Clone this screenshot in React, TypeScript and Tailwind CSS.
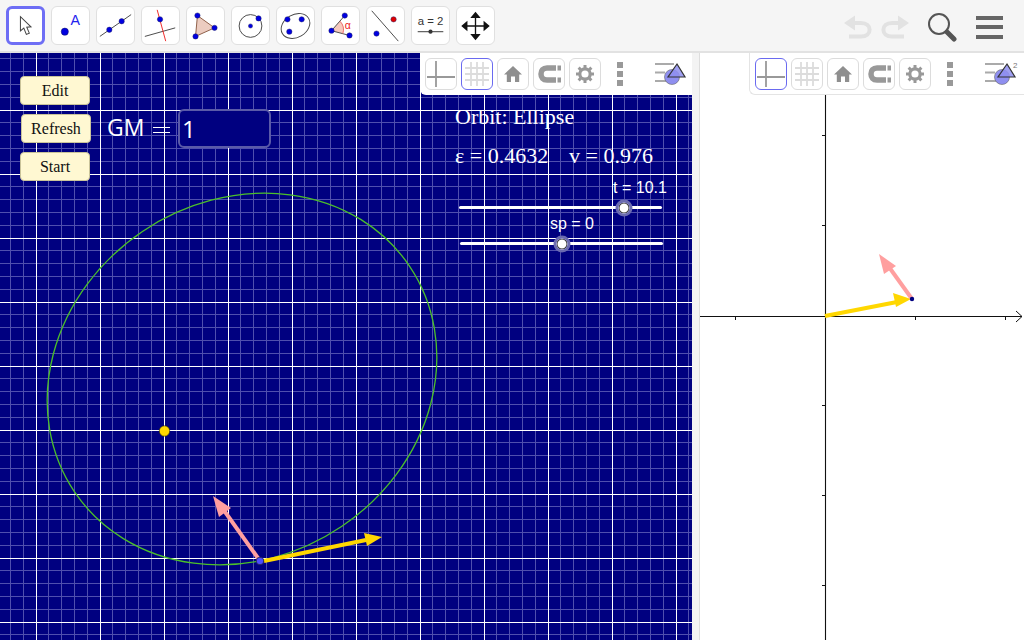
const toolBtn = "w-[39px] h-[39px] rounded-[6px] bg-white flex items-center justify-center shrink-0";
const styleBtn = "w-[32px] h-[32px] rounded-[6px] bg-white flex items-center justify-center shrink-0";

const Dot = ({ x, y, r = 2.8, c = "#0000e0" }: { x: number; y: number; r?: number; c?: string }) => (
  <circle cx={x} cy={y} r={r} fill={c} stroke="#222266" strokeWidth="0.5" />
);

const tools = [
  <svg width="39" height="39" viewBox="0 0 39 39" key="move">
    <path d="M13.5 9 L13.5 26 L17.5 22.5 L20.5 30 L24 28.5 L21 21.5 L26 21 Z" fill="#fff" stroke="#444" strokeWidth="1.2" />
  </svg>,
  <svg width="39" height="39" viewBox="0 0 39 39" key="point">
    <circle cx="13.5" cy="26" r="3.8" fill="#0000e0" stroke="#111155" strokeWidth="0.5" />
    <text x="19.5" y="19" fontSize="15" fill="#2222ee" fontFamily="'Liberation Sans', sans-serif">A</text>
  </svg>,
  <svg width="39" height="39" viewBox="0 0 39 39" key="line">
    <line x1="3" y1="31" x2="36" y2="8" stroke="#444" strokeWidth="1" />
    <Dot x={13} y={24} />
    <Dot x={26} y={15} />
  </svg>,
  <svg width="39" height="39" viewBox="0 0 39 39" key="perp">
    <line x1="3" y1="31" x2="35" y2="22" stroke="#444" strokeWidth="1" />
    <line x1="16" y1="3" x2="25" y2="36" stroke="#ee2222" strokeWidth="1" />
    <Dot x={19} y={13} />
  </svg>,
  <svg width="39" height="39" viewBox="0 0 39 39" key="poly">
    <path d="M11 9 L29 22 L9 31 Z" fill="#ecccc0" stroke="#8a5a44" strokeWidth="1" />
    <Dot x={11} y={9} />
    <Dot x={29} y={22} />
    <Dot x={9} y={31} />
  </svg>,
  <svg width="39" height="39" viewBox="0 0 39 39" key="circle">
    <circle cx="19.5" cy="20" r="12" fill="none" stroke="#444" strokeWidth="1" />
    <Dot x={19.5} y={20} r={2.2} />
    <Dot x={28} y={12} />
  </svg>,
  <svg width="39" height="39" viewBox="0 0 39 39" key="ellipse">
    <ellipse cx="19.5" cy="20" rx="16" ry="12" transform="rotate(-30 19.5 20)" fill="none" stroke="#444" strokeWidth="1" />
    <Dot x={11} y={13} />
    <Dot x={26} y={13} />
    <Dot x={13} y={26} />
  </svg>,
  <svg width="39" height="39" viewBox="0 0 39 39" key="angle">
    <path d="M10 25 L19 15 A13 13 0 0 1 22 28 Z" fill="#f6c9bd" />
    <path d="M24 9 L10 25 L29 30" fill="none" stroke="#444" strokeWidth="1" />
    <path d="M19 15 A13 13 0 0 1 22 28" fill="none" stroke="#e66" strokeWidth="1" />
    <text x="24" y="23" fontSize="11" fill="#ee2222" fontFamily="'Liberation Sans', sans-serif">α</text>
    <Dot x={24} y={9} />
    <Dot x={10} y={25} />
    <Dot x={29} y={30} />
  </svg>,
  <svg width="39" height="39" viewBox="0 0 39 39" key="reflect">
    <line x1="5" y1="4" x2="33" y2="36" stroke="#444" strokeWidth="1" />
    <Dot x={28} y={13} c="#e00000" />
    <Dot x={10} y={28} />
  </svg>,
  <svg width="39" height="39" viewBox="0 0 39 39" key="slider">
    <text x="19.5" y="19" textAnchor="middle" fontSize="12" fill="#333" fontFamily="'Liberation Sans', sans-serif">a = 2</text>
    <line x1="6" y1="26" x2="33" y2="26" stroke="#555" strokeWidth="1.2" />
    <circle cx="19.5" cy="26" r="2.2" fill="#333" />
  </svg>,
  <svg width="39" height="39" viewBox="0 0 39 39" key="pan">
    <path d="M19.5 10 V30 M9.5 20 H29.5" stroke="#111" strokeWidth="1.4" />
    <path d="M19.5 5 L25 11.5 H14 Z M19.5 35 L25 28.5 H14 Z M4.5 20 L11 14.5 V25.5 Z M34.5 20 L28 14.5 V25.5 Z" fill="#111" />
  </svg>,
];

// style bar icons, same drawings in both views
const AxesIcon = () => (
  <svg width="30" height="30" viewBox="0 0 30 30">
    <path d="M10 2 V28 M1 18 H29" stroke="#999" strokeWidth="1.8" fill="none" />
  </svg>
);
const GridIcon = () => (
  <svg width="30" height="30" viewBox="0 0 30 30">
    <path d="M9 3 V27 M15 3 V27 M21 3 V27 M3 9 H27 M3 15 H27 M3 21 H27" stroke="#dcdcdc" strokeWidth="1.8" fill="none" />
  </svg>
);
const HomeIcon = () => (
  <svg width="20" height="18" viewBox="0 0 20 18">
    <path d="M10 1 L19 9.5 H16.2 V17 H12 V11.5 H8 V17 H3.8 V9.5 H1 Z" fill="#8f8f8f" />
  </svg>
);
const MagnetIcon = () => (
  <svg width="26" height="20" viewBox="0 0 26 20">
    <path d="M20 4 H11 C7 4 5 6.5 5 10 C5 13.5 7 16 11 16 H20" fill="none" stroke="#999" strokeWidth="5.5" />
    <path d="M21.5 1.5 H25 V6.5 H21.5 Z M21.5 13.5 H25 V18.5 H21.5 Z" fill="#999" />
  </svg>
);
const GearIcon = () => (
  <svg width="20" height="20" viewBox="0 0 20 20">
    <circle cx="10" cy="10" r="5.2" fill="none" stroke="#999" strokeWidth="3.2" />
    <path d="M10 1 V4 M10 16 V19 M1 10 H4 M16 10 H19 M3.6 3.6 L5.8 5.8 M14.2 14.2 L16.4 16.4 M3.6 16.4 L5.8 14.2 M14.2 5.8 L16.4 3.6" stroke="#999" strokeWidth="3" />
  </svg>
);
const DotsIcon = () => (
  <div className="w-[30px] flex flex-col items-center gap-[3px]">
    <div className="w-[6px] h-[6px] bg-[#999]" />
    <div className="w-[6px] h-[6px] bg-[#999]" />
    <div className="w-[6px] h-[6px] bg-[#999]" />
  </div>
);
const ViewIcon = ({ two }: { two?: boolean }) => (
  <svg width="34" height="26" viewBox="0 0 34 26">
    <path d="M1 3 H20 M1 11.5 H11 M1 20 H13" stroke="#aaa" strokeWidth="2" />
    <circle cx="18" cy="16" r="7.5" fill="#8f8ff0" stroke="#666" strokeWidth="0.6" />
    <path d="M23 3 L31 16 H14 Z" fill="#8f8ff0" fillOpacity="0.85" stroke="#333" strokeWidth="1.2" />
    {two && <text x="29" y="7" fontSize="8" fill="#777" fontFamily="'Liberation Sans', sans-serif">2</text>}
  </svg>
);

const StyleBar = ({ active, two }: { active: "axes" | "grid"; two?: boolean }) => (
  <>
    <div className={`${styleBtn} border ${active === "axes" ? "border-[#6a6af0]" : "border-[#dcdcdc]"}`}><AxesIcon /></div>
    <div className={`${styleBtn} border ${active === "grid" ? "border-[#6a6af0]" : "border-[#dcdcdc]"}`}><GridIcon /></div>
    <div className={`${styleBtn} border border-[#dcdcdc]`}><HomeIcon /></div>
    <div className={`${styleBtn} border border-[#dcdcdc]`}><MagnetIcon /></div>
    <div className={`${styleBtn} border border-[#dcdcdc]`}><GearIcon /></div>
    <DotsIcon />
    <div className="ml-[15px]"><ViewIcon two={two} /></div>
  </>
);

// minor lines every 12.8px, snapped to whole pixels like the major ones
const minorX = Array.from({ length: 56 }, (_, i) => Math.floor(-2.4 + i * 12.8 + 0.001) + 0.5);
const minorY = Array.from({ length: 48 }, (_, i) => Math.floor(-7 + i * 12.8 + 0.001) + 0.5);
const majorX = [36.5, 100.5, 164.5, 228.5, 292.5, 356.5, 420.5, 484.5, 548.5, 612.5, 676.5];
const majorY = [57.5, 121.5, 185.5, 249.5, 313.5, 377.5, 441.5, 505.5, 569.5];

const GraphicsSvg = () => (
  <svg className="block" width="692" height="587" viewBox="0 0 692 587">
    {minorX.map((x) => <line key={x} x1={x} y1="0" x2={x} y2="587" stroke="#4f4fae" strokeWidth="1" shapeRendering="crispEdges" />)}
    {minorY.map((y) => <line key={y} x1="0" y1={y} x2="692" y2={y} stroke="#4f4fae" strokeWidth="1" shapeRendering="crispEdges" />)}
    {majorX.map((x) => <line key={x} x1={x} y1="0" x2={x} y2="587" stroke="#fff" strokeWidth="1" shapeRendering="crispEdges" />)}
    {majorY.map((y) => <line key={y} x1="0" y1={y} x2="692" y2={y} stroke="#fff" strokeWidth="1" shapeRendering="crispEdges" />)}
    <ellipse cx="242" cy="326" rx="202" ry="178" transform="rotate(-34 242 326)" fill="none" stroke="#4cc02a" strokeWidth="1.3" />
    <circle cx="164.5" cy="378" r="5.2" fill="#ffd700" stroke="#333300" strokeWidth="0.6" />
    <line x1="260" y1="508" x2="223" y2="456" stroke="#ff9f9f" strokeWidth="4" />
    <path d="M213 443 L231 455 L219 464 Z" fill="#ff9f9f" />
    <line x1="264" y1="508" x2="366" y2="487" stroke="#ffd700" strokeWidth="4" />
    <path d="M382 484 L364 480 L367 493 Z" fill="#ffd700" />
    <circle cx="260" cy="508" r="3.8" fill="#4d4dff" stroke="#222244" strokeWidth="0.8" />
  </svg>
);

const Slider = ({ label, pos, labelPos, w, cls }: { label: string; pos: number; labelPos: number; w: number; cls: string }) => (
  <div className={`absolute h-[3px] bg-white rounded-full ${cls}`} style={{ width: w }}>
    <span className="absolute bottom-[12px] -translate-x-1/2 text-[16px] leading-[18px] text-white whitespace-nowrap font-['Liberation_Sans',sans-serif]" style={{ left: labelPos }}>{label}</span>
    <span className="absolute top-1/2 -translate-x-1/2 -translate-y-1/2 w-[17px] h-[17px] rounded-full bg-white border-[3px] border-[#6b6bb0] shadow-[inset_0_0_0_1px_#333]" style={{ left: pos }} />
  </div>
);

const yellowBtn = "absolute h-[29px] w-[70px] rounded-[4px] bg-[#fff8d2] border border-[#c9c39a] text-[#111] text-[16px] flex items-center justify-center font-['Liberation_Serif',serif]";
const mathText = "absolute text-white text-[22px] leading-[26px] font-['Liberation_Serif',serif] whitespace-nowrap";

export default function App() {
  return (
    <div className="w-[1024px] h-[640px] bg-white overflow-hidden flex flex-col">
      {/* TOOLBAR */}
      <div className="h-[53px] shrink-0 bg-[#f5f5f5] border-b-2 border-[#e2e2e2] flex items-start pt-[6px] pl-[6px]">
        <div className="flex gap-[6px]">
          {tools.map((t, i) => (
            <div key={i} className={`${toolBtn} ${i === 0 ? "border-[3px] border-[#6e6ef5]" : "border border-[#e0e0e0]"}`}>{t}</div>
          ))}
        </div>
        <div className="ml-auto flex items-center h-[42px] pr-[21px]">
          <svg width="66" height="24" viewBox="0 0 66 24" className="mr-[17px]">
            <path d="M0 8 L11 0.5 V15.5 Z" fill="#e2e2e2" />
            <path d="M8 8 H17 C28.5 8 28.5 21.5 17 21.5 H5" fill="none" stroke="#e2e2e2" strokeWidth="4" />
            <path d="M65 8 L54 0.5 V15.5 Z" fill="#e2e2e2" />
            <path d="M57 8 H48 C36.5 8 36.5 21.5 48 21.5 H60" fill="none" stroke="#e2e2e2" strokeWidth="4" />
          </svg>
          <svg width="30" height="30" viewBox="0 0 30 30" className="mr-[19px]">
            <circle cx="12" cy="12" r="10" fill="none" stroke="#555" strokeWidth="2" />
            <path d="M20 20 L27 27" stroke="#555" strokeWidth="5" strokeLinecap="round" />
          </svg>
          <div className="flex flex-col gap-[5.5px]">
            <div className="w-[27px] h-[4px] bg-[#666]" />
            <div className="w-[27px] h-[4px] bg-[#666]" />
            <div className="w-[27px] h-[4px] bg-[#666]" />
          </div>
        </div>
      </div>

      <div className="flex flex-1 min-h-0">
        {/* GRAPHICS VIEW */}
        <div className="relative w-[692px] bg-[#000080] overflow-hidden">
          <GraphicsSvg />

          <div className={`${yellowBtn} left-[20px] top-[23px]`}>Edit</div>
          <div className={`${yellowBtn} left-[21px] top-[61px]`}>Refresh</div>
          <div className={`${yellowBtn} left-[20px] top-[99px]`}>Start</div>

          <div className="absolute left-[107px] top-[59px] text-white text-[23px] leading-[30px] font-['Open_Sans',sans-serif] whitespace-nowrap">GM</div>
          <div className="absolute left-[153px] top-[74px] w-[17px] h-[6px] border-y border-white" />
          <div className="absolute left-[178px] top-[56px] w-[93px] h-[39px] rounded-[6px] bg-[#000080] border-2 border-[#5a5aa8] text-white text-[24px] leading-[35px] pl-[2px] font-['Open_Sans',sans-serif]">1</div>

          <div className={`${mathText} left-[455px] top-[51px]`}>Orbit: Ellipse</div>
          <div className={`${mathText} left-[455px] top-[90px]`}>ε = 0.4632</div>
          <div className={`${mathText} left-[569px] top-[90px]`}>v = 0.976</div>

          <Slider label="t = 10.1" pos={165} labelPos={181} w={203} cls="left-[459px] top-[153px]" />
          <Slider label="sp = 0" pos={102} labelPos={112} w={203} cls="left-[460px] top-[189px]" />

          <div className="absolute left-[420px] top-0 w-[272px] h-[42px] bg-white rounded-bl-[6px] flex items-center gap-[4px] pl-[5px]">
            <StyleBar active="grid" />
          </div>
        </div>

        {/* DIVIDER */}
        <div className="w-[8px] bg-[#f3f3f3] border-r border-[#dddddd]" />

        {/* GRAPHICS 2 */}
        <div className="relative flex-1 bg-white overflow-hidden">
          <svg className="block" width="324" height="587" viewBox="0 0 324 587">
            <path d="M125.5 0 V587 M0 263.5 H322" stroke="#111" strokeWidth="1.1" />
            <path d="M316 258 L322 263.5 L316 269" fill="none" stroke="#111" strokeWidth="1" />
            <path d="M35.5 264 V267 M215.5 264 V267 M305.5 264 V267 M122 82.5 H125 M122 172.5 H125 M122 352.5 H125 M122 442.5 H125 M122 532.5 H125" stroke="#111" strokeWidth="1" />
            <line x1="125" y1="263" x2="197" y2="249" stroke="#ffd700" strokeWidth="4" />
            <path d="M211 246 L193 240 L196 254 Z" fill="#ffd700" />
            <line x1="212" y1="246" x2="189" y2="214" stroke="#ff9f9f" strokeWidth="4" />
            <path d="M179 201 L196 213 L184 221 Z" fill="#ff9f9f" />
            <circle cx="212" cy="246" r="2.2" fill="#000080" />
          </svg>
          <div className="absolute right-0 top-0 w-[275px] h-[42px] bg-white rounded-bl-[6px] border-l border-b border-[#e4e4e4] flex items-center gap-[4px] pl-[5px]">
            <StyleBar active="axes" two />
          </div>
        </div>
      </div>
    </div>
  );
}
